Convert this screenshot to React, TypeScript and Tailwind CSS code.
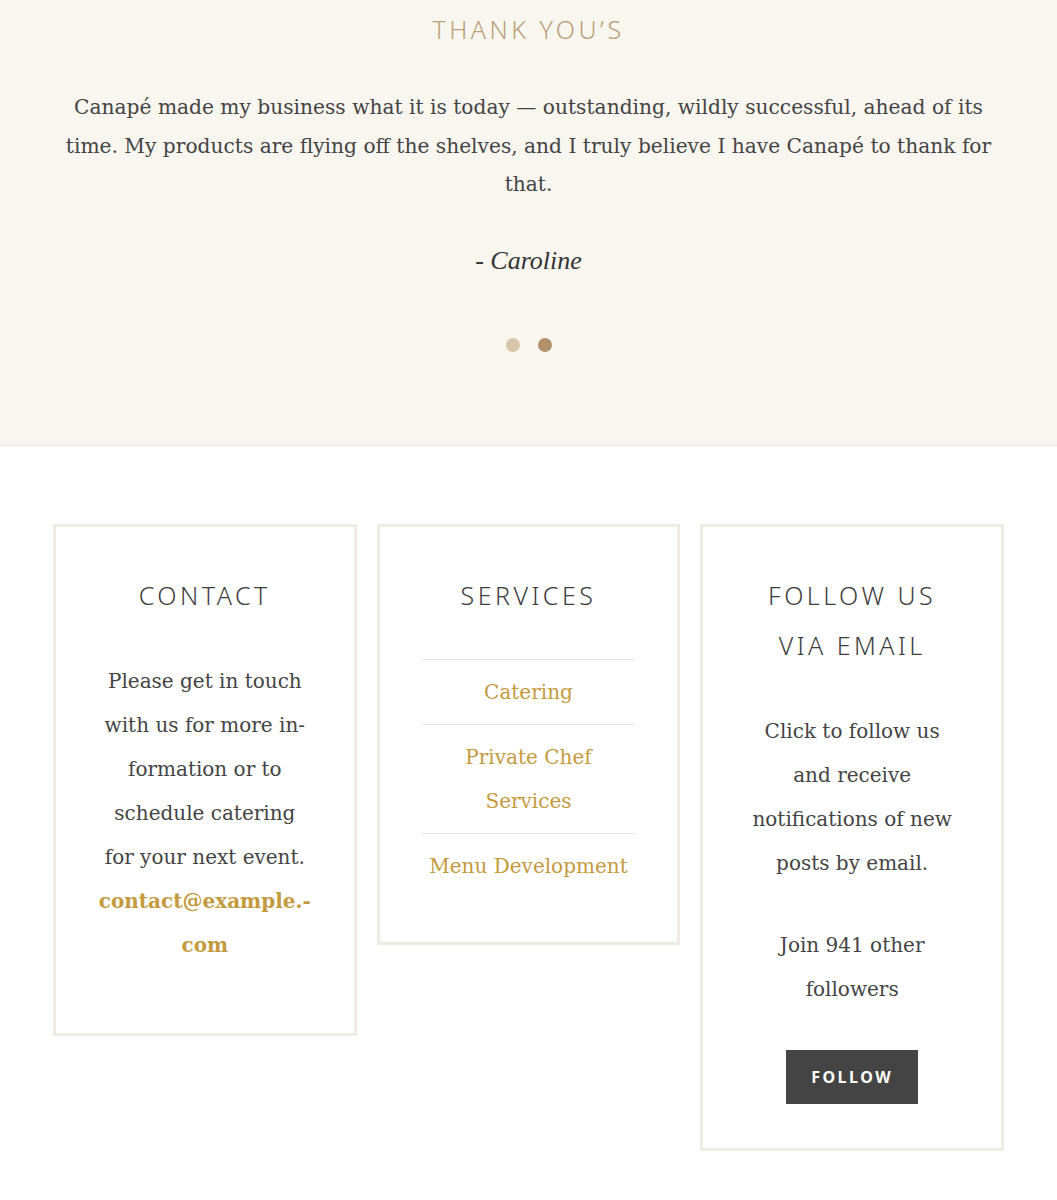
import React from 'react';

const serif = "font-['DejaVu_Serif',serif]";
const heading = "font-['Noto_Sans',sans-serif]";

function Box({ title, children }: { title: React.ReactNode; children: React.ReactNode }) {
  return (
    <div className="border-[3px] border-[#eeebe4] bg-white px-[42px] pt-[43px] pb-[44px] text-center">
      <h3 className={`${heading} text-[25px] leading-[50px] tracking-[3.5px] text-[#3d3d3d] uppercase font-light mb-[39px]`}>
        {title}
      </h3>
      {children}
    </div>
  );
}

export default function App() {
  const services = ['Catering', 'Private Chef Services', 'Menu Development'];

  return (
    <div className={`min-h-[1200px] bg-white text-[#444] ${serif}`}>
      {/* Testimonials */}
      <section className="h-[446px] bg-[#f9f5ef] border-b border-[#ebe6de] pt-[14px]">
        <h2 className={`${heading} text-center text-[25px] leading-[30px] tracking-[3.5px] text-[#b99f78] font-light`}>
          THANK YOU’S
        </h2>
        <p className="mx-auto mt-[44px] max-w-[945px] text-center text-[20.2px] leading-[38.5px] text-[#444]">
          Canapé made my business what it is today — outstanding, wildly successful, ahead of its time. My
          products are flying off the shelves, and I truly believe I have Canapé to thank for that.
        </p>
        <p className="mt-[40px] text-center text-[26px] leading-[34px] italic font-['Liberation_Serif',serif] text-[#333]">
          - Caroline
        </p>
        <div className="mt-[60px] flex justify-center gap-[18px]">
          <span className="block h-[14px] w-[14px] rounded-full bg-[#d8c6aa]" />
          <span className="block h-[14px] w-[14px] rounded-full bg-[#b0916a]" />
        </div>
      </section>

      {/* Widgets */}
      <section className="grid grid-cols-3 items-start gap-[20px] px-[53px] pt-[78px] pb-[48px]">
        <Box title="Contact">
          <p className="text-[20px] leading-[44px] mb-[22px]">
            Please get in touch with us for more in{'\u00AD'}formation or to schedule catering for your next event.{' '}
            <a href="#" className="font-bold text-[#c49a3e]">
              contact@example.{'\u00AD'}com
            </a>
          </p>
        </Box>

        <Box title="Services">
          <ul>
            {services.map((s) => (
              <li key={s} className="border-t border-[#e8e6e2] py-[10px]">
                <a href="#" className="block text-[20px] leading-[44px] text-[#c49a3e]">
                  {s}
                </a>
              </li>
            ))}
          </ul>
        </Box>

        <Box title={<>Follow Us<br />via Email</>}>
          <p className="text-[20px] leading-[44px] mb-[38px]">
            Click to follow us and receive notifications of new posts by email.
          </p>
          <p className="text-[20px] leading-[44px] mb-[39px]">Join 941 other followers</p>
          <button className={`h-[54px] w-[132px] bg-[#444] text-white text-[16px] font-bold tracking-[2.5px] ${heading}`}>
            FOLLOW
          </button>
        </Box>
      </section>
    </div>
  );
}
